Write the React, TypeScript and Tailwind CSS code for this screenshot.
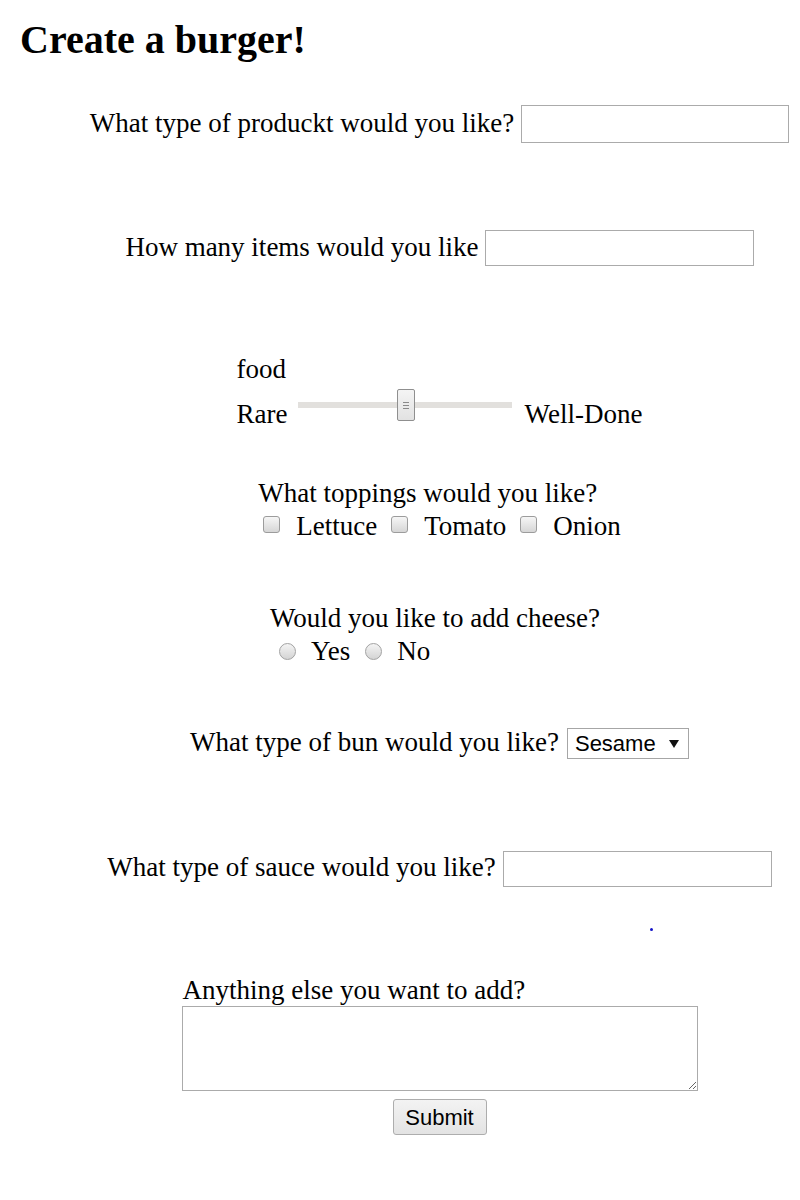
import React from "react";

const serif = "font-['Liberation_Serif','Times_New_Roman',serif]";
const sans = "font-['Liberation_Sans',Arial,sans-serif]";

function Checkbox() {
  return (
    <span className="mt-[5px] block w-[17px] h-[17px] rounded-[3px] border border-[#9c9c9c] bg-linear-to-b from-[#f6f6f6] to-[#d6d6d6] shrink-0" />
  );
}

function Radio() {
  return (
    <span className="mt-[7px] block w-[17px] h-[17px] rounded-full border border-[#a2a2a2] bg-linear-to-b from-[#f4f4f4] to-[#d4d4d4] shrink-0" />
  );
}

export default function App() {
  return (
    <div className={`w-[800px] min-h-[1200px] bg-white text-black ${serif}`}>
      <h2 className="ml-[20px] pt-[17px] text-[40px] leading-[46px] font-bold">
        Create a burger!
      </h2>

      <div className="flex flex-col items-center pl-[79px] text-[27px] leading-[31px]">
        {/* product */}
        <div className="mt-[42px] flex items-start gap-[7px]">
          <span className="mt-[3px] whitespace-nowrap">What type of produckt would you like?</span>
          <input
            type="text"
            className="w-[268px] h-[38px] border border-[#ababab] bg-white outline-none"
          />
        </div>

        {/* items */}
        <div className="mt-[87px] flex items-start gap-[6px]">
          <span className="mt-[2px] whitespace-nowrap">How many items would you like</span>
          <input
            type="text"
            className="w-[269px] h-[36px] border border-[#ababab] bg-white outline-none"
          />
        </div>

        {/* slider */}
        <div className="mt-[88px] flex flex-col items-start">
          <span>food</span>
          <div className="mt-[4px] flex items-start">
            <span className="mt-[10px]">Rare</span>
            <div className="relative ml-[10px] w-[214px] h-[32px]">
              <div className="absolute left-0 right-0 top-[13px] h-[6px] bg-[#e2e0dd]" />
              <div className="absolute left-[99px] top-0 w-[18px] h-[32px] rounded-[2px] border border-[#8f8f8f] bg-linear-to-b from-[#f4f4f4] to-[#e2e2e2] flex flex-col items-center justify-center gap-[2px]">
                <span className="block w-[6px] h-[1px] bg-[#8a8a8a]" />
                <span className="block w-[6px] h-[1px] bg-[#8a8a8a]" />
                <span className="block w-[6px] h-[1px] bg-[#8a8a8a]" />
              </div>
            </div>
            <span className="ml-[13px] mt-[10px] whitespace-nowrap">Well-Done</span>
          </div>
        </div>

        {/* toppings */}
        <div className="mt-[48px] flex flex-col items-start">
          <span className="whitespace-nowrap">What toppings would you like?</span>
          <div className="mt-[2px] ml-[5px] flex items-start">
            <Checkbox />
            <span className="ml-[16px] mr-[14px]">Lettuce</span>
            <Checkbox />
            <span className="ml-[16px] mr-[14px]">Tomato</span>
            <Checkbox />
            <span className="ml-[16px]">Onion</span>
          </div>
        </div>

        {/* cheese */}
        <div className="mt-[61px] pr-[9px] flex flex-col items-start">
          <span className="whitespace-nowrap">Would you like to add cheese?</span>
          <div className="mt-[2px] ml-[9px] flex items-start">
            <Radio />
            <span className="ml-[15px] mr-[15px]">Yes</span>
            <Radio />
            <span className="ml-[15px]">No</span>
          </div>
        </div>

        {/* bun */}
        <div className="mt-[60px] flex items-start gap-[8px]">
          <span className="whitespace-nowrap">What type of bun would you like?</span>
          <div
            className={`mt-[1px] w-[122px] h-[31px] border border-[#a6a6a6] bg-white flex items-center justify-between pl-[7px] pr-[9px] ${sans} text-[22px] leading-[25px]`}
          >
            <span>Sesame</span>
            <svg width="10" height="8" viewBox="0 0 10 8" className="mt-[1px]">
              <path d="M0 0 L10 0 L5 8 Z" fill="#111" />
            </svg>
          </div>
        </div>

        {/* sauce */}
        <div className="mt-[92px] flex items-start gap-[7px]">
          <span className="mt-[1px] whitespace-nowrap">What type of sauce would you like?</span>
          <input
            type="text"
            className="w-[269px] h-[36px] border border-[#ababab] bg-white outline-none"
          />
        </div>

        {/* stray dot */}
        <div className="mt-[41px] self-start ml-[571px] w-[3px] h-[3px] rounded-full bg-[#1414c8]" />

        {/* anything else */}
        <div className="mt-[44px] w-[516px] flex flex-col items-start">
          <span className="pl-[1px] whitespace-nowrap">Anything else you want to add?</span>
          <textarea className="w-[516px] h-[85px] border border-[#ababab] bg-white outline-none resize" />
        </div>

        <button
          className={`mt-[8px] w-[94px] h-[36px] rounded-[3px] border border-[#adadad] bg-linear-to-b from-[#f3f3f3] to-[#e3e3e3] ${sans} text-[22px] leading-[25px] text-black`}
        >
          Submit
        </button>
      </div>
    </div>
  );
}
